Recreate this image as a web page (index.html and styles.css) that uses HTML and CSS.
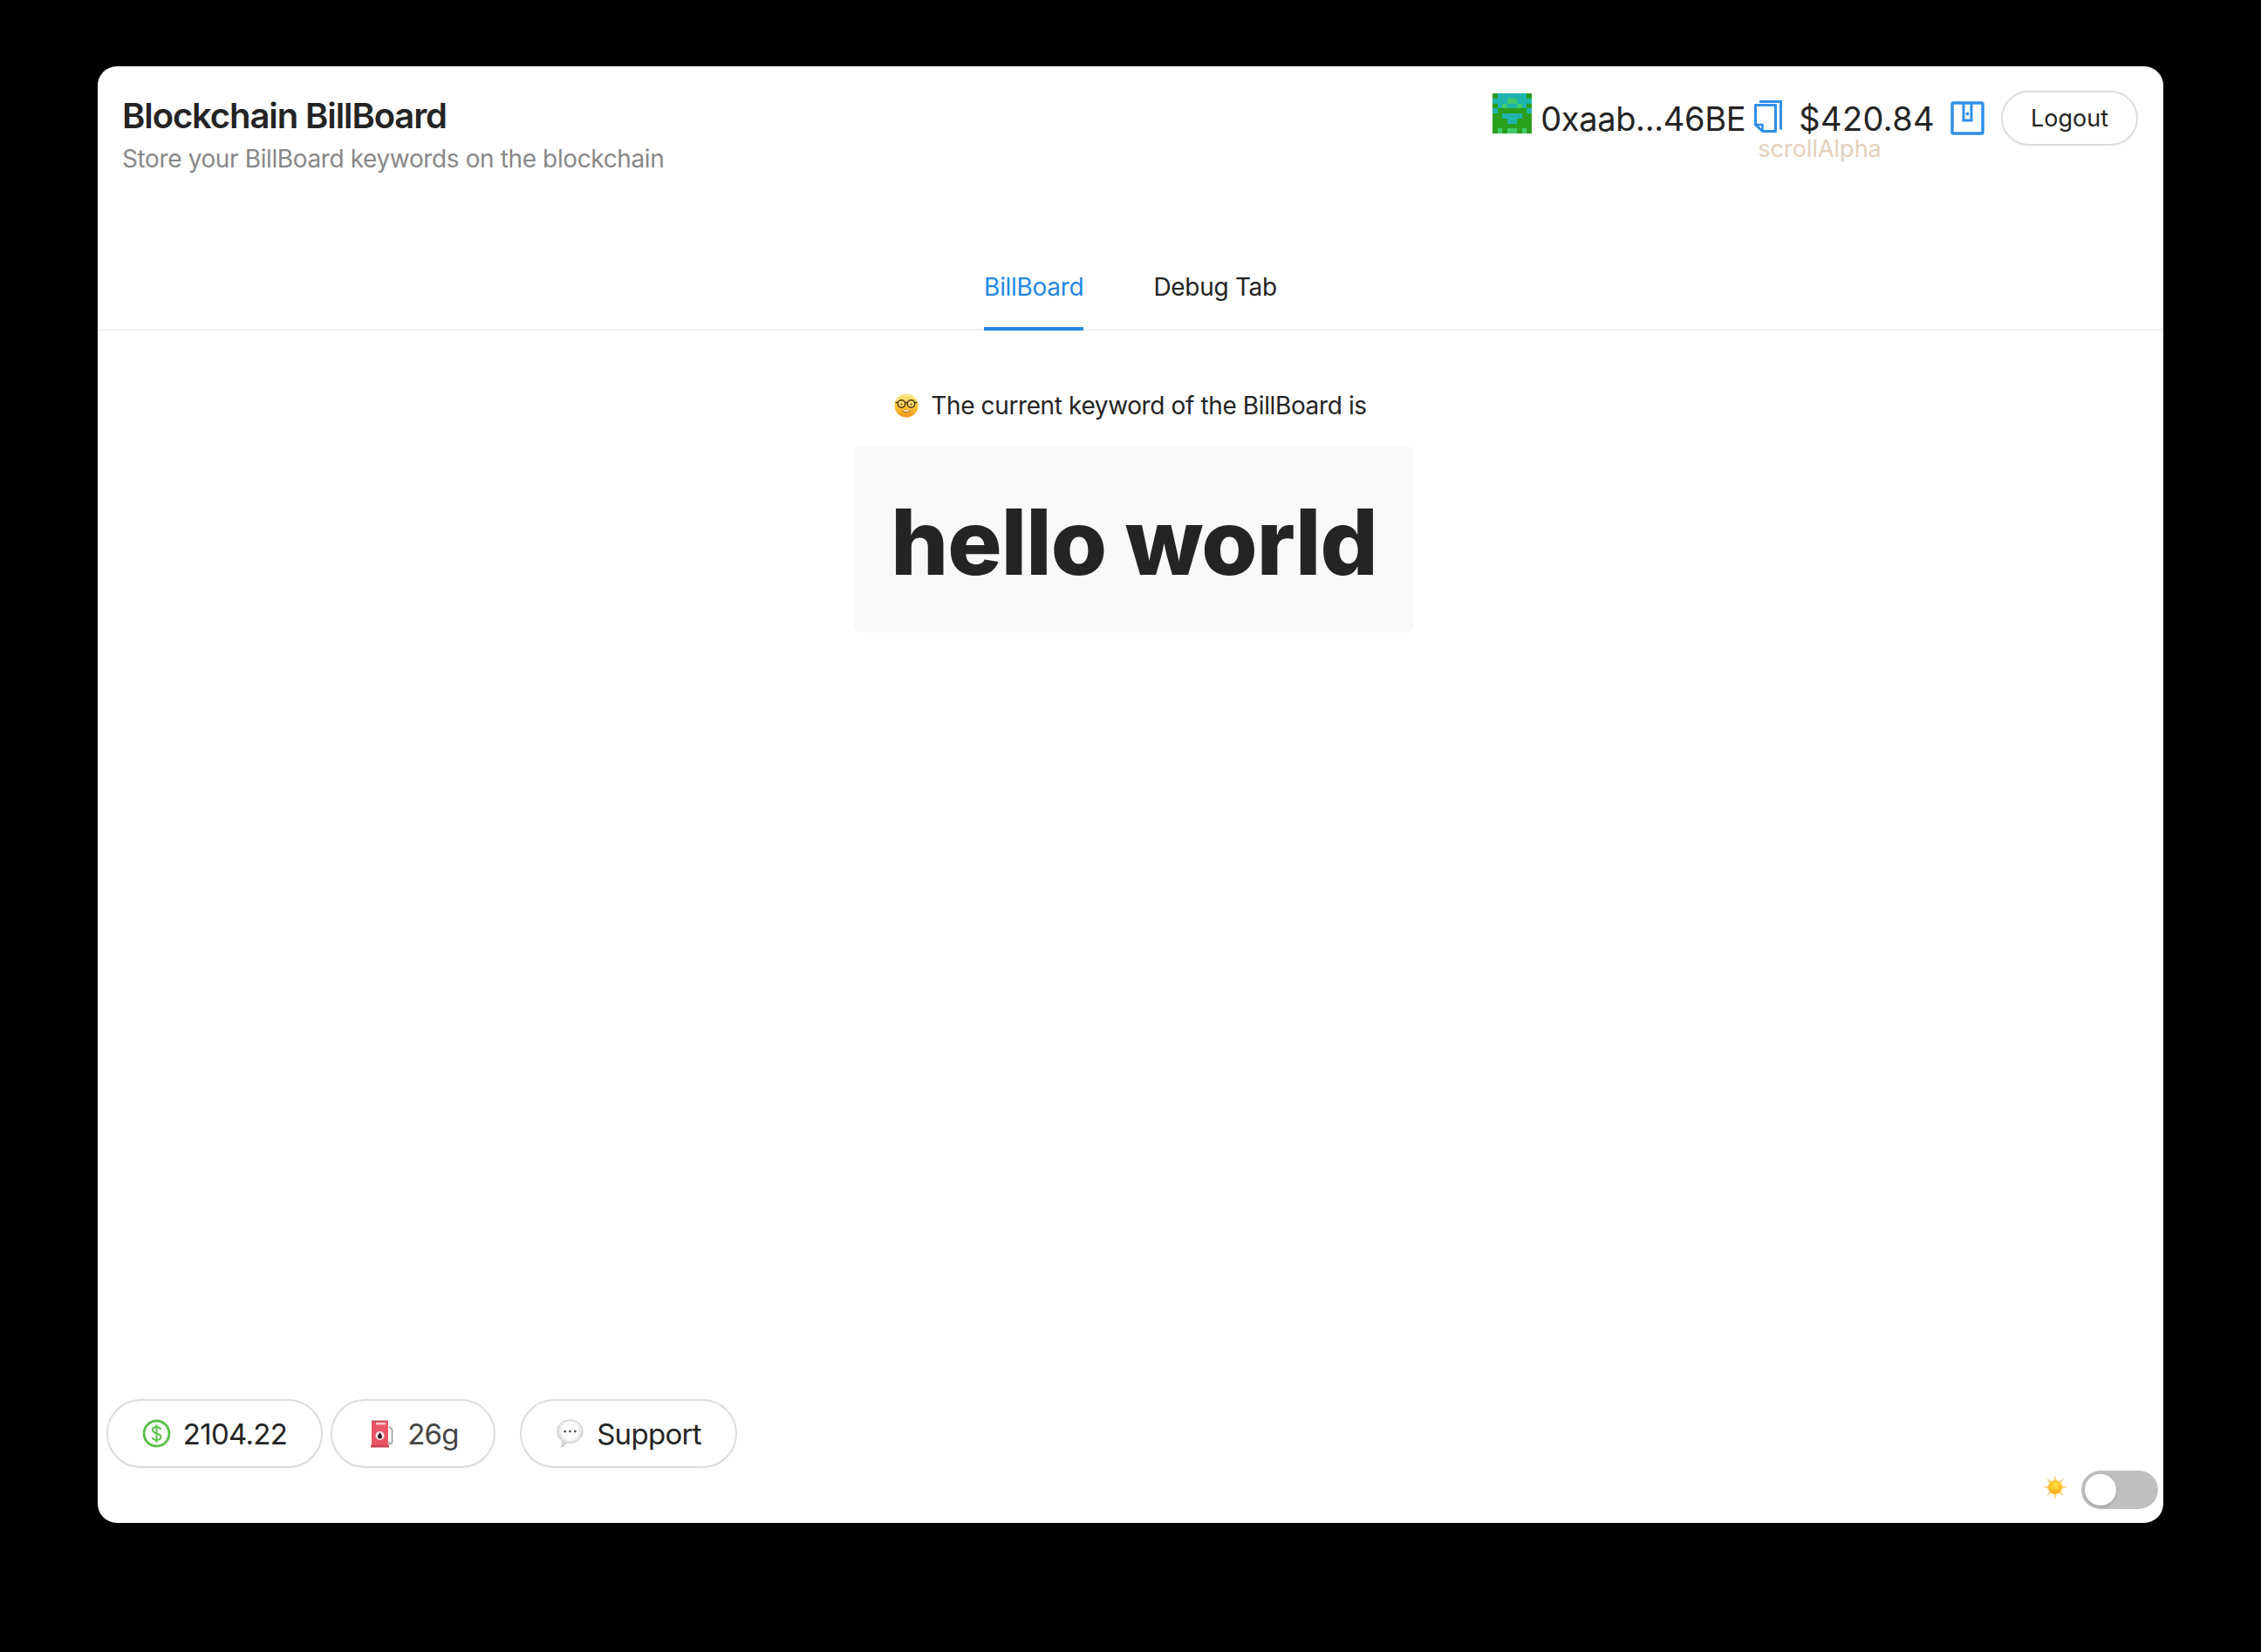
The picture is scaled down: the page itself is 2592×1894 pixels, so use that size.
FILE: index.html
```html
<!DOCTYPE html>
<html lang="en">
<head>
<meta charset="utf-8">
<title>Blockchain BillBoard</title>
<link rel="stylesheet" href="styles.css">
</head>
<body>
<main class="window">
  <header class="header">
    <div class="brand">
      <h1 class="brand-title">Blockchain BillBoard</h1>
      <p class="brand-sub">Store your BillBoard keywords on the blockchain</p>
    </div>
    <div class="account">
      <svg class="avatar" viewBox="0 0 8 8" preserveAspectRatio="none" shape-rendering="crispEdges">
        <rect width="8" height="8" fill="#2a9f1c"/>
        <path fill="#1fb4ad" d="M1 0h6v1H1zM0 1h8v1H0zM1 2h6v1H1zM0 3h1v1H0zM7 3h1v1H7zM2 4h4v1H2zM3 5h2v1H3z"/>
        <path fill="#3fcb6b" d="M3 1h2v1H3zM2 2h1v1H2zM5 2h1v1H5zM1 7h1v1H1zM3 7h2v1H3zM6 7h1v1H6z"/>
      </svg>
      <span class="address">0xaab...46BE</span>
      <svg class="copy-icon" viewBox="0 0 32 37" fill="none" stroke="#2f8fe6" stroke-width="3">
        <path d="M6 1.500h24.500v32"/>
        <path d="M2 5.500h22.500v30H9.500L1.500 28V5.500z" stroke-linejoin="round"/>
        <path d="M1.500 28h8v7.500" stroke-width="2.500"/>
      </svg>
      <span class="balance">$420.84<span class="network">scrollAlpha</span></span>
      <svg class="save-icon" viewBox="0 0 39 39" fill="none" stroke="#2f8fe6">
        <rect x="2" y="2" width="35" height="35" rx="1.500" stroke-width="3.500"/>
        <path d="M15 2v20h9V2" stroke-width="3"/>
        <circle cx="19.500" cy="14.500" r="2" fill="#2f8fe6" stroke="none"/>
      </svg>
      <button class="pill pill-logout" type="button">Logout</button>
    </div>
  </header>

  <nav class="tabs">
    <a class="tab tab-active">BillBoard</a>
    <a class="tab">Debug Tab</a>
  </nav>

  <section class="content">
    <p class="keyword-label">
      <svg class="nerd" viewBox="0 0 28 28">
        <defs>
          <linearGradient id="face" x1="0" y1="0" x2="0" y2="1">
            <stop offset="0" stop-color="#fde98f"/>
            <stop offset="0.5" stop-color="#fcc933"/>
            <stop offset="1" stop-color="#f29420"/>
          </linearGradient>
        </defs>
        <circle cx="14" cy="14" r="13.500" fill="url(#face)"/>
        <path d="M1.500 10.500h25" stroke="#4a3412" stroke-width="1.400"/>
        <circle cx="8.500" cy="12" r="4.200" fill="#fddc6c" stroke="#4a3412" stroke-width="1.500"/>
        <circle cx="19.500" cy="12" r="4.200" fill="#fddc6c" stroke="#4a3412" stroke-width="1.500"/>
        <circle cx="8.500" cy="12.500" r="0.900" fill="#4a3412"/>
        <circle cx="19.500" cy="12.500" r="0.900" fill="#4a3412"/>
        <path d="M9 19.500q5 4.500 10 0" fill="#fff2dc" stroke="#a5601a" stroke-width="1"/>
      </svg>
      <span>The current keyword of the BillBoard is</span>
    </p>
    <div class="keyword-box">hello world</div>
  </section>

  <footer class="footer">
    <div class="pills">
      <button class="pill pill-lg pill-price" type="button">
        <svg class="pill-icon" viewBox="0 0 32 32" fill="none" stroke="#5cc04a">
          <circle cx="16" cy="16" r="14" stroke-width="2.800"/>
          <path d="M20.500 11.500c-.6-1.700-2.300-2.700-4.500-2.700-2.600 0-4.500 1.300-4.500 3.400 0 4.800 9.300 2.700 9.300 7.500 0 2.200-2 3.500-4.800 3.500-2.500 0-4.300-1.100-4.900-3M16 6v20" stroke-width="1.900"/>
        </svg>
        <span>2104.22</span>
      </button>
      <button class="pill pill-lg pill-gas" type="button">
        <svg class="pill-icon pump" viewBox="0 0 28 32">
          <rect x="1" y="1" width="19" height="4" fill="#c9505f"/>
          <rect x="1" y="3" width="19" height="28" rx="1" fill="#ea5565"/>
          <rect x="6" y="3.500" width="11" height="2.500" fill="#f6c9cd"/>
          <rect x="0" y="29" width="21" height="3" fill="#cf4454"/>
          <circle cx="10.500" cy="18.500" r="5" fill="#fde8ea"/>
          <path d="M10.500 14.800c1.700 2.300 2.500 3.500 2.500 4.600a2.500 2.500 0 0 1-5 0c0-1.100.8-2.300 2.500-4.600z" fill="#2f2224"/>
          <path d="M21 8l3.500 3v15a1.800 1.800 0 0 1-3.600 0" fill="none" stroke="#8a8f8f" stroke-width="1.400"/>
        </svg>
        <span>26g</span>
      </button>
      <button class="pill pill-lg pill-support" type="button">
        <svg class="pill-icon" viewBox="0 0 32 34">
          <defs>
            <radialGradient id="bubble" cx="0.500" cy="0.400" r="0.650">
              <stop offset="0.450" stop-color="#ffffff"/>
              <stop offset="1" stop-color="#bdbdbd"/>
            </radialGradient>
          </defs>
          <path d="M16 1c8.300 0 15 5.800 15 13.500S24.300 28 16 28c-1.300 0-2.500-.1-3.700-.4-1.300 2.200-3.600 4.300-6.800 5.400 1.400-1.900 2-4.300 1.800-7.200C3.100 23.500 1 19.300 1 14.500 1 6.800 7.700 1 16 1z" fill="url(#bubble)" stroke="#c4c4c4" stroke-width="1"/>
          <circle cx="10" cy="14.500" r="1.400" fill="#444"/>
          <circle cx="16" cy="14.500" r="1.400" fill="#444"/>
          <circle cx="22" cy="14.500" r="1.400" fill="#444"/>
        </svg>
        <span>Support</span>
      </button>
    </div>
    <div class="theme">
      <svg class="sun" viewBox="0 0 28 28">
        <defs>
          <radialGradient id="sunfill" cx="0.500" cy="0.350" r="0.650">
            <stop offset="0" stop-color="#ffe24a"/>
            <stop offset="1" stop-color="#fbaa12"/>
          </radialGradient>
        </defs>
        <path fill="#f6d68c" d="M14 0l1.800 6h-3.600zM14 28l-1.800-6h3.600zM0 14l6-1.800v3.600zM28 14l-6 1.800v-3.600zM4.100 4.100l5.500 3-2.500 2.500zM23.900 23.900l-5.500-3 2.500-2.500zM23.900 4.100l-3 5.500-2.500-2.500zM4.100 23.900l3-5.500 2.500 2.500z"/>
        <circle cx="14" cy="14" r="8" fill="url(#sunfill)"/>
      </svg>
      <span class="toggle"><span class="toggle-knob"></span></span>
    </div>
  </footer>
</main>
</body>
</html>
```

FILE: styles.css
```css
* { box-sizing: border-box; }

html, body { margin: 0; height: 100%; }

body {
  background: #000;
  padding: 76px 112px 148px;
  font-family: Inter, "Liberation Sans", sans-serif;
  color: #242424;
}

.window {
  height: 1670px;
  background: #fff;
  border-radius: 22px;
  display: flex;
  flex-direction: column;
  overflow: hidden;
}

.header {
  display: flex;
  justify-content: space-between;
  align-items: flex-start;
  padding: 28px 29px 0 28px;
  height: 224px;
}

.brand { padding-top: 6px; }

.brand-title {
  margin: 0;
  font-size: 40px;
  line-height: 46px;
  font-weight: 600;
  letter-spacing: -1.1px;
}

.brand-sub {
  margin: 6px 0 0;
  font-size: 28px;
  line-height: 40px;
  letter-spacing: -0.38px;
  color: #888;
}

.account {
  display: flex;
  align-items: flex-start;
}

.avatar {
  width: 45px;
  height: 46px;
  margin-top: 3px;
  margin-right: 10px;
}

.address, .balance {
  font-size: 38px;
  line-height: 52px;
  margin-top: 6px;
}

.address { letter-spacing: -0.35px; }

.copy-icon {
  width: 32px;
  height: 37px;
  margin: 11px 0 0 10px;
}

.balance {
  position: relative;
  margin-left: 19px;
  letter-spacing: 0.35px;
}

.network {
  position: absolute;
  left: -47px;
  top: 44px;
  font-size: 27px;
  line-height: 34px;
  letter-spacing: 0;
  color: #e3d0ba;
  white-space: nowrap;
}

.save-icon {
  width: 39px;
  height: 39px;
  margin: 12px 0 0 18px;
}

.pill {
  background: #fff;
  border: 2px solid #dcdcdc;
  border-radius: 999px;
  font-family: inherit;
  color: #242424;
  padding: 0;
  display: flex;
  align-items: center;
  justify-content: center;
  box-shadow: 0 2px 0 rgba(0, 0, 0, 0.02);
}

.pill-logout {
  width: 157px;
  height: 63px;
  margin-left: 19px;
  font-size: 27px;
}

.tabs {
  display: flex;
  justify-content: center;
  gap: 80px;
  height: 79px;
  border-bottom: 2px solid #f0f0f0;
}

.tab {
  font-size: 28px;
  line-height: 58px;
  letter-spacing: -0.3px;
  height: 79px;
  color: #242424;
}

.tab-active {
  color: #2388e2;
  border-bottom: 4px solid #2388e2;
}

.content {
  flex: 1;
  display: flex;
  flex-direction: column;
  align-items: center;
  padding-top: 64px;
}

.keyword-label {
  margin: 0;
  display: flex;
  align-items: center;
  gap: 14px;
  font-size: 28px;
  line-height: 44px;
  letter-spacing: -0.38px;
}

.nerd { width: 28px; height: 28px; }

.keyword-box {
  margin: 25px 0 0 8px;
  width: 642px;
  height: 213px;
  padding-top: 4px;
  background: #f8f8f8;
  border-radius: 8px;
  display: flex;
  align-items: center;
  justify-content: center;
  font-size: 104px;
  font-weight: 800;
  letter-spacing: -1px;
}

.footer {
  display: flex;
  justify-content: space-between;
  align-items: flex-end;
  padding: 0 6px 16px 10px;
}

.pills {
  display: flex;
  gap: 9px;
  margin-bottom: 47px;
}

.pill-lg {
  height: 79px;
  font-size: 33px;
  letter-spacing: -0.7px;
  gap: 14px;
}

.pill-icon { width: 33px; height: 33px; }

.pump { width: 28px; }

.pill-price { width: 248px; }

.pill-gas { width: 189px; padding-left: 4px; color: #444; }

.pill-support { width: 249px; margin-left: 19px; }

.theme {
  display: flex;
  align-items: center;
  gap: 16px;
}

.sun { width: 28px; height: 28px; margin-bottom: 6px; }

.toggle {
  width: 88px;
  height: 44px;
  border-radius: 22px;
  background: #bfbfbf;
  padding: 4px;
  display: block;
}

.toggle-knob {
  display: block;
  width: 36px;
  height: 36px;
  border-radius: 50%;
  background: #fff;
  box-shadow: 0 2px 4px rgba(0, 0, 0, 0.15);
}
```
